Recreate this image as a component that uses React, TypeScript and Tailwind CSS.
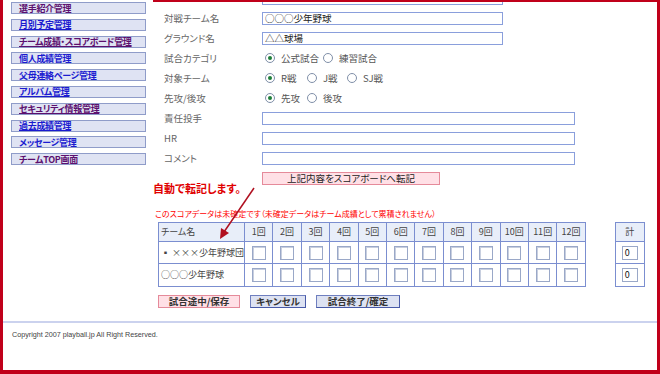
import React from "react";

const menuItems = [
  { label: "選手紹介管理", visited: true },
  { label: "月別予定管理", visited: false },
  { label: "チーム成績・スコアボード管理", visited: true },
  { label: "個人成績管理", visited: false },
  { label: "父母連絡ページ管理", visited: false },
  { label: "アルバム管理", visited: false },
  { label: "セキュリティ情報管理", visited: true },
  { label: "過去成績管理", visited: false },
  { label: "メッセージ管理", visited: false },
  { label: "チームTOP画面", visited: true },
];

const innings = Array.from({ length: 12 }, (_, i) => i + 1);

function Radio({ checked, label, width }: { checked?: boolean; label: string; width: string }) {
  return (
    <span className={`flex shrink-0 items-center gap-[6px] ${width}`}>
      <span className="shrink-0 w-[10px] h-[10px] rounded-full border border-[#7f8fa8] bg-white flex items-center justify-center">
        {checked && <span className="w-[4px] h-[4px] rounded-full bg-[#1f7f3a]" />}
      </span>
      <span className="text-[9.5px] text-[#555] whitespace-nowrap">{label}</span>
    </span>
  );
}

function FormRow({ label, children }: { label: string; children?: React.ReactNode }) {
  return (
    <div className="flex items-center h-[20px]">
      <span className="w-[98px] shrink-0 text-[9.5px] text-[#666]">{label}</span>
      {children}
    </div>
  );
}

function TextBox({ wide, value }: { wide?: boolean; value?: string }) {
  return (
    <div
      className={`h-[13px] shrink-0 border border-[#8a9fdc] bg-white text-[9.5px] leading-[11px] text-[#222] pl-[2px] ${
        wide ? "w-[313px]" : "w-[241px]"
      }`}
    >
      {value}
    </div>
  );
}

function Cell() {
  return <span className="inline-block align-middle w-[14px] h-[14px] border border-[#9aa8c8] bg-white shadow-[inset_1px_1px_0_#c8cfdf]" />;
}

export default function App() {
  return (
    <div className="w-[660px] h-[374px] bg-white border-l-[3px] border-r-[3px] border-b-[4px] border-[#c0001a] flex flex-col overflow-hidden font-['Noto_Sans_CJK_JP',sans-serif] [font-feature-settings:'palt']">
      <div className="flex h-[321px]">
        {/* side menu */}
        <aside className="w-[150px] shrink-0 pl-[8px] pt-[2px] flex flex-col gap-[4.8px]">
          {menuItems.map((m) => (
            <div
              key={m.label}
              className="w-[135px] h-[12px] bg-[#dfe3f3] border border-[#8f9cc9] flex items-center pl-[7px] overflow-hidden"
            >
              <span
                className={`text-[9px] leading-none font-bold underline whitespace-nowrap tracking-[-0.3px] ${
                  m.visited ? "text-[#5c0f6e]" : "text-[#1a1ad0]"
                }`}
              >
                {m.label}
              </span>
            </div>
          ))}
        </aside>

        {/* main */}
        <main className="relative flex-1 border-t-2 border-[#c0001a] overflow-hidden">
          <div className="-mt-[14px] pl-[11px]">
            <FormRow label="">
              <TextBox />
            </FormRow>
            <FormRow label="対戦チーム名">
              <TextBox value="○○○少年野球" />
            </FormRow>
            <FormRow label="グラウンド名">
              <TextBox value="△△球場" />
            </FormRow>
            <FormRow label="試合カテゴリ">
              <div className="flex ml-[3px]">
                <Radio checked label="公式試合" width="w-[58px]" />
                <Radio label="練習試合" width="w-[60px]" />
              </div>
            </FormRow>
            <FormRow label="対象チーム">
              <div className="flex ml-[3px]">
                <Radio checked label="R戦" width="w-[42px]" />
                <Radio label="J戦" width="w-[40px]" />
                <Radio label="SJ戦" width="w-[50px]" />
              </div>
            </FormRow>
            <FormRow label="先攻/後攻">
              <div className="flex ml-[3px]">
                <Radio checked label="先攻" width="w-[42px]" />
                <Radio label="後攻" width="w-[42px]" />
              </div>
            </FormRow>
            <FormRow label="責任投手">
              <TextBox wide />
            </FormRow>
            <FormRow label="HR">
              <TextBox wide />
            </FormRow>
            <FormRow label="コメント">
              <TextBox wide />
            </FormRow>
            <div className="pl-[98px] mt-[4px]">
              <div className="w-[178px] h-[13px] bg-[#ffe0e6] border border-[#e58a9a] flex items-center justify-center text-[9.5px] leading-none text-[#222]">
                上記内容をスコアボードへ転記
              </div>
            </div>
          </div>

          <div className="-mt-[3px]">
            <p className="text-[11px] leading-[12px] font-bold text-[#e00000]">自動で転記します。</p>
            <p className="mt-[14px] pl-[2px] text-[8px] leading-[12px] text-[#ff0000] whitespace-nowrap">
              このスコアデータは未確定です（未確定データはチーム成績として累積されません）
            </p>

            <div className="flex items-start mt-[2px] pl-[5px] gap-[29px]">
              <table className="border-collapse border border-[#7b8ed0] text-[9px] text-[#444] table-fixed">
                <tbody>
                  <tr className="h-[19px] bg-[#e8eef9]">
                    <td className="w-[86px] border border-[#7b8ed0] pl-[2px]">チーム名</td>
                    {innings.map((n) => (
                      <td key={n} className="w-[28.4px] border border-[#7b8ed0] text-center">
                        {n}回
                      </td>
                    ))}
                  </tr>
                  {["▪ ×××少年野球団", "○○○少年野球"].map((team, i) => (
                    <tr key={team} className={i === 0 ? "h-[22px]" : "h-[23px]"}>
                      <td className="border border-[#7b8ed0] pl-[2px] whitespace-nowrap overflow-hidden">{team}</td>
                      {innings.map((n) => (
                        <td key={n} className="border border-[#7b8ed0] text-center leading-none">
                          <Cell />
                        </td>
                      ))}
                    </tr>
                  ))}
                </tbody>
              </table>

              <table className="border-collapse border border-[#7b8ed0] text-[9px] text-[#444]">
                <tbody>
                  <tr className="h-[19px] bg-[#e8eef9]">
                    <td className="w-[29px] border border-[#7b8ed0] text-center">計</td>
                  </tr>
                  {[0, 1].map((i) => (
                    <tr key={i} className={i === 0 ? "h-[22px]" : "h-[23px]"}>
                      <td className="border border-[#7b8ed0] text-center leading-none">
                        <span className="inline-block align-middle w-[16px] h-[14px] border border-[#9aa8c8] bg-white text-[9px] leading-[12px] text-left pl-[2px] text-[#111]">
                          0
                        </span>
                      </td>
                    </tr>
                  ))}
                </tbody>
              </table>
            </div>

            <div className="flex mt-[8px] pl-[5px] gap-[10px] text-[9.5px] leading-none font-bold text-[#333]">
              <div className="w-[82px] h-[13px] bg-[#ffe0e6] border border-[#e58a9a] flex items-center justify-center">
                試合途中/保存
              </div>
              <div className="w-[56px] h-[13px] bg-[#dde2f2] border border-[#6f7fbf] border-r-[#485aa8] border-b-[#485aa8] flex items-center justify-center">
                キャンセル
              </div>
              <div className="w-[84px] h-[13px] bg-[#dde2f2] border border-[#6f7fbf] border-r-[#485aa8] border-b-[#485aa8] flex items-center justify-center">
                試合終了/確定
              </div>
            </div>
          </div>

          {/* arrow pointing at the score table */}
          <svg className="absolute left-0 top-0 pointer-events-none" width="507" height="319">
            <line x1="101" y1="186" x2="71" y2="230" stroke="#b01020" strokeWidth="1.5" />
            <polygon points="67,237 68,226 76,231" fill="#b01020" />
          </svg>
        </main>
      </div>

      <div className="h-[2px] bg-[#cbd2ee]" />
      <footer className="pl-[9px] pt-[7px] text-[7.2px] leading-[10px] text-[#444] font-['Liberation_Sans',sans-serif]">
        Copyright 2007 playball.jp All Right Reserved.
      </footer>
    </div>
  );
}
